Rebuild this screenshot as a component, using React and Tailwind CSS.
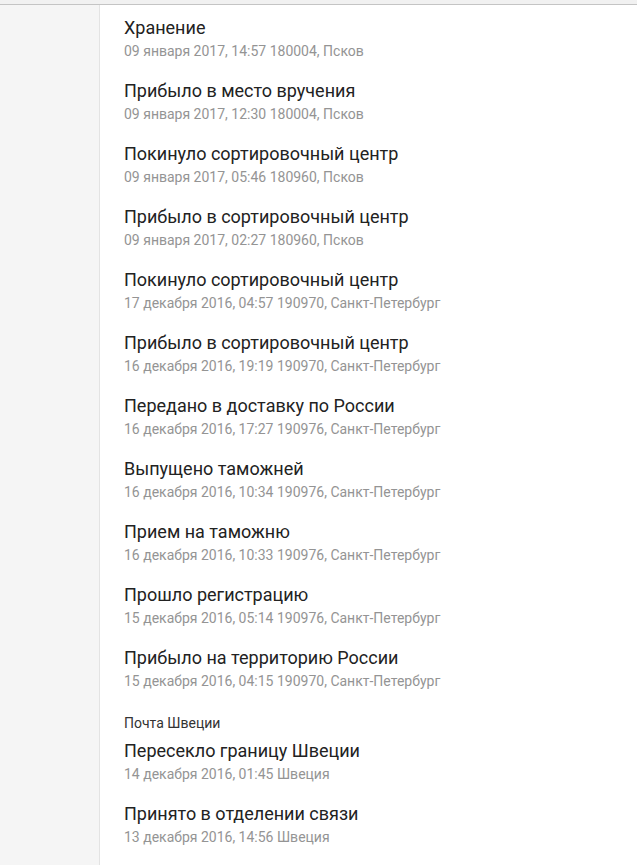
const ru = [
  ['Хранение', '09 января 2017, 14:57 180004, Псков'],
  ['Прибыло в место вручения', '09 января 2017, 12:30 180004, Псков'],
  ['Покинуло сортировочный центр', '09 января 2017, 05:46 180960, Псков'],
  ['Прибыло в сортировочный центр', '09 января 2017, 02:27 180960, Псков'],
  ['Покинуло сортировочный центр', '17 декабря 2016, 04:57 190970, Санкт-Петербург'],
  ['Прибыло в сортировочный центр', '16 декабря 2016, 19:19 190970, Санкт-Петербург'],
  ['Передано в доставку по России', '16 декабря 2016, 17:27 190976, Санкт-Петербург'],
  ['Выпущено таможней', '16 декабря 2016, 10:34 190976, Санкт-Петербург'],
  ['Прием на таможню', '16 декабря 2016, 10:33 190976, Санкт-Петербург'],
  ['Прошло регистрацию', '15 декабря 2016, 05:14 190976, Санкт-Петербург'],
  ['Прибыло на территорию России', '15 декабря 2016, 04:15 190970, Санкт-Петербург'],
]

const se = [
  ['Пересекло границу Швеции', '14 декабря 2016, 01:45 Швеция'],
  ['Принято в отделении связи', '13 декабря 2016, 14:56 Швеция'],
]

function Event({ title, meta }) {
  return (
    <li className="mb-[19px]">
      <div className="text-[18px] leading-6 text-[#222]">{title}</div>
      <div className="mt-0.5 text-[14px] leading-[18px] text-[#949494]">{meta}</div>
    </li>
  )
}

export default function App() {
  return (
    <div className="flex min-h-[865px] flex-col bg-white font-['Roboto',sans-serif]">
      <div className="h-[5px] border-b border-[#c4c4c4] bg-[#f1f1f1]" />
      <div className="flex flex-1">
        <aside className="w-[100px] shrink-0 border-r border-[#e3e3e3] bg-[#f5f5f5]" />
        <main className="flex-1 pl-6 pt-[11px]">
          <ul>
            {ru.map(([t, m], i) => (
              <Event key={i} title={t} meta={m} />
            ))}
          </ul>
          {/* li margin collapses with this one */}
          <div className="mt-[24px] mb-[7px] text-[14px] leading-[18px] text-[#333]">Почта Швеции</div>
          <ul>
            {se.map(([t, m], i) => (
              <Event key={i} title={t} meta={m} />
            ))}
          </ul>
        </main>
      </div>
    </div>
  )
}
